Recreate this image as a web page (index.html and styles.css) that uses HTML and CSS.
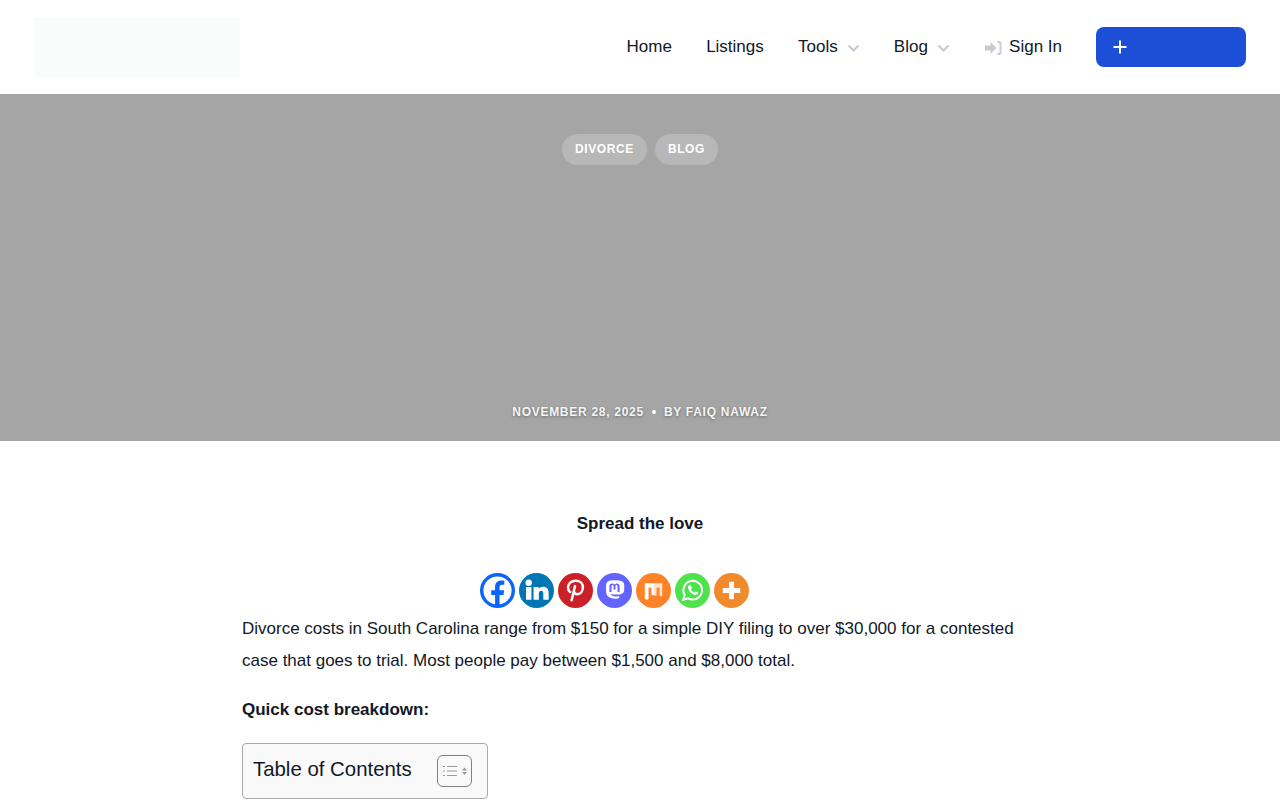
FILE: index.html
```html
<!DOCTYPE html>
<html lang="en">
<head>
    <meta charset="UTF-8">
    <meta name="viewport" content="width=device-width, initial-scale=1.0">
    <title>Divorce costs in South Carolina</title>
    <link rel="stylesheet" href="styles.css">
</head>
<body>
    <!-- Header -->
    <header class="site-header">
        <a class="logo" href="#"></a>
        <nav class="main-nav">
            <a href="#">Home</a>
            <a href="#">Listings</a>
            <a href="#" class="has-sub">Tools
                <svg class="chevron" viewBox="0 0 12 8"><path d="M1 1.500l5 5 5-5"/></svg>
            </a>
            <a href="#" class="has-sub">Blog
                <svg class="chevron" viewBox="0 0 12 8"><path d="M1 1.500l5 5 5-5"/></svg>
            </a>
            <a href="#" class="sign-in">
                <svg class="sign-icon" viewBox="0 0 17 14"><path class="arrow" d="M0 4.500h5.500V1l6 6-6 6V9.500H0z"/><path class="door" d="M12.500 1h1.500A1.500 1.500 0 0 1 15.500 2.500v9a1.500 1.500 0 0 1-1.500 1.500h-1.500"/></svg>
                Sign In
            </a>
        </nav>
        <a class="add-btn" href="#">
            <svg class="plus" viewBox="0 0 14 14"><path d="M7 0.500v13M0.500 7h13"/></svg>
        </a>
    </header>

    <!-- Hero -->
    <section class="hero">
        <div class="tags">
            <a class="tag" href="#">Divorce</a>
            <a class="tag" href="#">Blog</a>
        </div>
        <div class="meta">
            <span>November 28, 2025</span>
            <span class="dot"></span>
            <span>By Faiq Nawaz</span>
        </div>
    </section>

    <!-- Article -->
    <main class="article">
        <p class="spread">Spread the love</p>
        <div class="share">
            <a class="share-icon" href="#" aria-label="Facebook">
                <svg viewBox="0 0 36 36"><circle cx="18" cy="18" r="18" fill="#0866ff"/><circle cx="18" cy="18" r="14.500" fill="#fff"/><path fill="#0866ff" d="M15.500 34V22.500h-4v-4.800h4v-3.400c0-4.200 2.500-6.600 6.300-6.600 1.200 0 2.400.1 3.200.3v4.200h-2.200c-2 0-2.700 1.100-2.700 2.700v2.800h4.800l-.8 4.800h-4V34z"/></svg>
            </a>
            <a class="share-icon" href="#" aria-label="LinkedIn">
                <svg viewBox="0 0 36 36"><circle cx="18" cy="18" r="18" fill="#0077b5"/><circle cx="10" cy="10" r="3.300" fill="#fff"/><path fill="#fff" d="M7.200 14.500h5.600V27.500H7.200zM15 14.500h5.200v1.900c1-1.400 2.600-2.300 4.600-2.300 4.100 0 5.700 2.500 5.700 6.400v7h-5.500v-6.300c0-1.900-.6-2.900-2.200-2.900-1.700 0-2.400 1.200-2.400 2.900v6.300H15z"/></svg>
            </a>
            <a class="share-icon" href="#" aria-label="Pinterest">
                <svg viewBox="0 0 36 36"><circle cx="18" cy="18" r="18" fill="#cb2027"/><path fill="none" stroke="#fff" stroke-width="2.600" stroke-linecap="round" d="M12.500 19.500c-1.500-1.200-2.200-2.900-2.200-4.700 0-4 3.400-6.800 7.800-6.800 4.300 0 7.500 2.700 7.500 6.500 0 4.300-2.500 7.300-5.700 7.300-1.700 0-3-1-3.400-2.400M17.500 13.500l-3.500 14.500"/></svg>
            </a>
            <a class="share-icon" href="#" aria-label="Mastodon">
                <svg viewBox="0 0 36 36"><circle cx="18" cy="18" r="18" fill="#6364ff"/><path fill="#fff" d="M18 7.500c-2.800 0-5 .2-6.300.9-1.500.8-2.400 2.300-2.400 4.200 0 4.200-.2 8.700 1.400 10.800 1.700 2.200 5 3.100 8.300 3.100 1.500 0 2.900-.3 3.800-.7v-2.200c-1.300.4-2.900.7-4.200.6-2.100-.1-3.900-.6-4.200-2.500 2.700.6 6 .7 8.800.3 2.500-.4 4.300-1.800 4.600-3.600.3-1.700.3-3.800.2-5.800 0-2-.9-3.400-2.400-4.200-1.300-.7-4.800-.9-7.600-.9z"/><path fill="#6364ff" d="M12.800 19.500v-6.200c0-1.600 1.200-2.600 2.700-2.600 1.200 0 2 .6 2.500 1.500.5-.9 1.300-1.500 2.500-1.500 1.500 0 2.700 1 2.700 2.600v6.200h-2.100v-5.800c0-.9-.4-1.400-1.100-1.400-.8 0-1 .6-1 1.400v3.300h-2v-3.300c0-.8-.2-1.400-1-1.400-.7 0-1.100.5-1.100 1.400v5.800z"/></svg>
            </a>
            <a class="share-icon" href="#" aria-label="Mix">
                <svg viewBox="0 0 36 36"><circle cx="18" cy="18" r="18" fill="#ff8226"/><path fill="#fff" d="M9 10.500h9.500v11c0 1-.5 1.500-1.300 1.500s-1.300-.5-1.300-1.500V15h-3v11c0 1-.7 1.500-1.500 1.500S9 27 9 26z"/><path fill="#ffe4cf" d="M18.500 10.500H27v12c0 1-.6 1.500-1.400 1.500s-1.400-.5-1.400-1.500V15h-3v7c0 1-.5 1.500-1.300 1.500s-1.400-.5-1.400-1.500z"/></svg>
            </a>
            <a class="share-icon" href="#" aria-label="WhatsApp">
                <svg viewBox="0 0 36 36"><circle cx="18" cy="18" r="18" fill="#4fe24f"/><path fill="none" stroke="#fff" stroke-width="2" d="M8.500 27.500l1.400-5a9.600 9.600 0 1 1 3.700 3.600z"/><path fill="#fff" d="M15 12.500c-.5 0-1.500.9-1.500 2.400 0 3.500 4.100 7.600 7.800 7.600 1.500 0 2.500-1.100 2.500-2.100 0-.4-2.200-1.500-2.600-1.500-.4 0-.9 1.100-1.300 1.100-1 0-3.300-2.100-3.300-3.100 0-.5.8-.9.8-1.400 0-.3-1-3-1.400-3z"/></svg>
            </a>
            <a class="share-icon" href="#" aria-label="More">
                <svg viewBox="0 0 36 36"><circle cx="18" cy="18" r="18" fill="#f08a2c"/><path fill="#fff" d="M15.500 9h5v6.500H27v5h-6.500V27h-5v-6.500H9v-5h6.500z"/></svg>
            </a>
        </div>
        <p class="intro">Divorce costs in South Carolina range from $150 for a simple DIY filing to over $30,000 for a contested case that goes to trial. Most people pay between $1,500 and $8,000 total.</p>
        <p class="breakdown">Quick cost breakdown:</p>
        <div class="toc">
            <span class="toc-title">Table of Contents</span>
            <span class="toc-toggle">
                <svg viewBox="0 0 28 14"><path class="lines" d="M1 2.500h2M5 2.500h10M1 7h2M5 7h10M1 11.500h2M5 11.500h10"/><path class="arrows" d="M22.500 3.500l2.500 3h-5zM22.500 11l2.500-3h-5z"/></svg>
            </span>
        </div>
    </main>
</body>
</html>
```
FILE: styles.css
```css
body {
    margin: 0;
    padding: 0;
    background: #ffffff;
    font-family: 'Liberation Sans', Arial, sans-serif;
    color: #111827;
    overflow: hidden;
}

a {
    color: inherit;
    text-decoration: none;
}

/* Header */
.site-header {
    height: 94px;
    box-sizing: border-box;
    padding: 0 34px;
    display: flex;
    align-items: center;
}

.logo {
    width: 206px;
    height: 60px;
    background: #fafcfb;
}

.main-nav {
    margin-left: auto;
    display: flex;
    align-items: center;
    gap: 34.2px;
    font-size: 17px;
}

.main-nav a {
    display: flex;
    align-items: center;
}

.has-sub {
    gap: 9px;
}

.chevron {
    width: 13px;
    height: 8px;
    margin-top: 2px;
    fill: none;
    stroke: #c4c9d2;
    stroke-width: 2;
}

.main-nav .sign-in {
    margin-left: 1px;
    gap: 7px;
}

.sign-icon {
    width: 17px;
    height: 14px;
    margin-top: 1px;
}

.sign-icon .arrow {
    fill: #c7ccd4;
}

.sign-icon .door {
    fill: none;
    stroke: #c7ccd4;
    stroke-width: 2;
}

.add-btn {
    width: 150px;
    height: 40px;
    margin-left: 34px;
    box-sizing: border-box;
    padding-left: 17px;
    display: flex;
    align-items: center;
    background: #1d4ed8;
    border-radius: 8px;
}

.plus {
    width: 14px;
    height: 14px;
    fill: none;
    stroke: #ffffff;
    stroke-width: 2;
}

/* Hero */
.hero {
    height: 347px;
    box-sizing: border-box;
    padding: 40px 0 21px;
    background: #a5a5a5;
    color: #ffffff;
    display: flex;
    flex-direction: column;
    align-items: center;
    justify-content: space-between;
}

.tags {
    display: flex;
    gap: 8px;
}

.tag {
    padding: 8px 13px;
    background: rgba(255, 255, 255, 0.2);
    border-radius: 16px;
    font-size: 12px;
    line-height: 15px;
    font-weight: bold;
    letter-spacing: 0.6px;
    text-transform: uppercase;
}

.meta {
    display: flex;
    align-items: center;
    gap: 8px;
    font-size: 12px;
    line-height: 16px;
    font-weight: bold;
    letter-spacing: 0.72px;
    text-transform: uppercase;
    color: rgba(255, 255, 255, 0.92);
    text-shadow: 0 1px 3px rgba(0, 0, 0, 0.35);
}

.dot {
    width: 4px;
    height: 4px;
    background: #ffffff;
    border-radius: 50%;
}

/* Article */
.article {
    width: 796px;
    margin: 0 auto;
    font-size: 17px;
    line-height: 32px;
}

.article p {
    margin: 0;
}

.article .spread {
    margin-top: 67px;
    text-align: center;
    font-weight: bold;
}

.share {
    margin-top: 33px;
    height: 36px;
    padding-left: 238px;
    display: flex;
    gap: 4px;
}

.share-icon {
    width: 35px;
    height: 35px;
}

.share-icon svg {
    display: block;
    width: 35px;
    height: 35px;
}

.article .intro {
    margin-top: 4px;
}

.article .breakdown {
    margin-top: 17px;
    font-weight: bold;
}

.toc {
    width: 246px;
    height: 56px;
    margin-top: 17px;
    box-sizing: border-box;
    padding: 0 15px 4px 10px;
    display: flex;
    align-items: center;
    justify-content: space-between;
    background: #f9f9f9;
    border: 1px solid #aaaaaa;
    border-radius: 4px;
}

.toc-title {
    font-size: 20.4px;
}

.toc-toggle {
    width: 35px;
    height: 32px;
    margin: 4px 0 0;
    box-sizing: border-box;
    padding-left: 2px;
    display: flex;
    align-items: center;
    justify-content: center;
    border: 1px solid #808080;
    border-radius: 6px;
}

.toc-toggle svg {
    width: 28px;
    height: 14px;
}

.lines {
    fill: none;
    stroke: #999999;
    stroke-width: 1.2;
}

.arrows {
    fill: #999999;
}
```
